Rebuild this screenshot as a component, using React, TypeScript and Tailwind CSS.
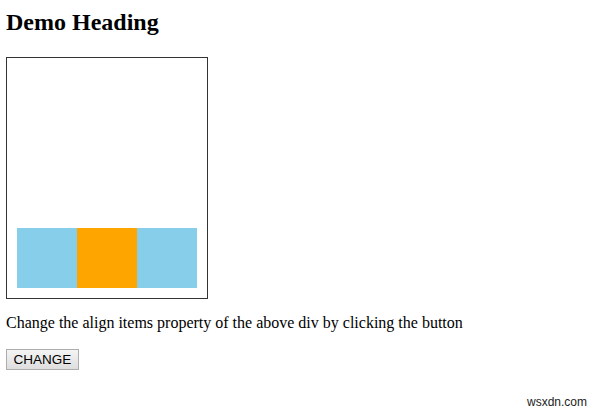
export default function App() {
  return (
    <div className="relative h-[413px] w-full bg-white px-[6px] text-black" style={{ fontFamily: '"Liberation Serif", "Times New Roman", serif' }}>
      <h2 className="pt-[9px] text-[24px] font-bold leading-[27px]">Demo Heading</h2>

      <div className="mt-[21px] flex h-[242px] w-[202px] items-end border border-[#333333] p-[10px]">
        <div className="h-[60px] w-[60px] bg-[#87ceeb]" />
        <div className="h-[60px] w-[60px] bg-[#ffa500]" />
        <div className="h-[60px] w-[60px] bg-[#87ceeb]" />
      </div>

      <p className="mt-[15px] text-[16px] leading-[18px]">
        Change the align items property of the above div by clicking the button
      </p>

      <button
        className="mt-[17px] flex h-[21px] w-[73px] items-center justify-center border border-[#adadad] bg-gradient-to-b from-[#f4f4f4] to-[#dedede] text-[13.5px] leading-none text-black"
        style={{ fontFamily: '"Liberation Sans", Arial, sans-serif' }}
      >
        CHANGE
      </button>

      <div
        className="absolute bottom-[4px] right-[13px] text-[12px] leading-[14px] text-[#222222]"
        style={{ fontFamily: '"Liberation Sans", Arial, sans-serif' }}
      >
        wsxdn.com
      </div>
    </div>
  );
}
